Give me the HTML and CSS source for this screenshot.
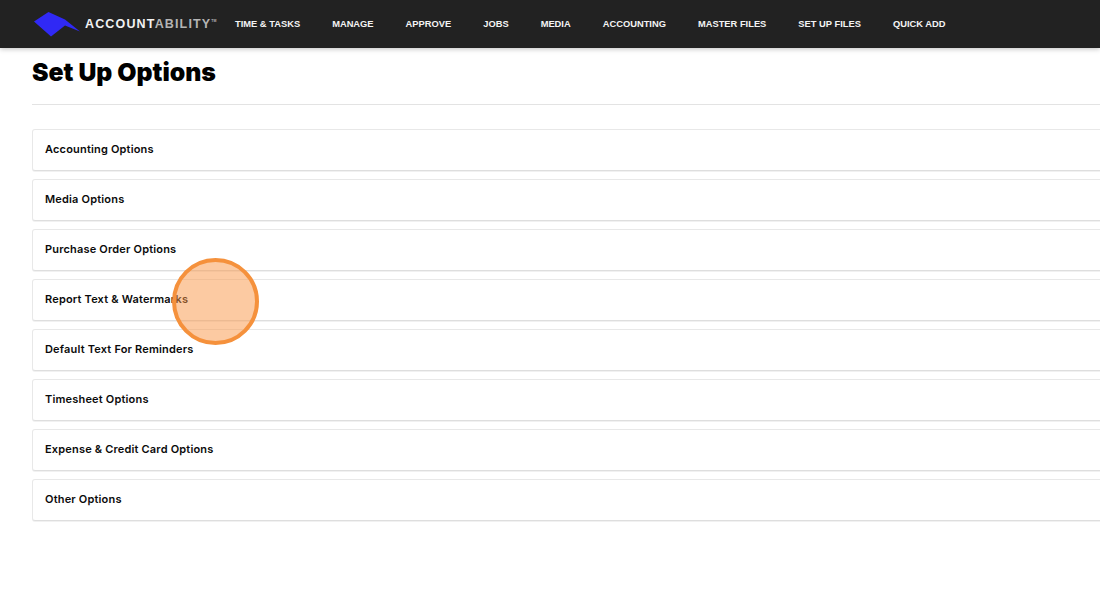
FILE: index.html
```html
<!DOCTYPE html>
<html lang="en">
<head>
  <meta charset="UTF-8">
  <title>Set Up Options</title>
  <link rel="stylesheet" href="styles.css">
</head>
<body>
  <header class="topbar">
    <a class="brand" href="#">
      <svg class="brand-mark" width="48" height="26" viewBox="0 0 48 26">
        <polygon points="1,10.5 15.5,1 32,8.5 47,20.5 32,14.5 18,25.5" fill="#3029f5"/>
      </svg>
      <span class="brand-name">ACCOUNT<span class="brand-dim">ABILITY</span><sup class="brand-tm">TM</sup></span>
    </a>
    <nav class="mainnav">
      <a href="#">TIME &amp; TASKS</a>
      <a href="#">MANAGE</a>
      <a href="#">APPROVE</a>
      <a href="#">JOBS</a>
      <a href="#">MEDIA</a>
      <a href="#">ACCOUNTING</a>
      <a href="#">MASTER FILES</a>
      <a href="#">SET UP FILES</a>
      <a href="#">QUICK ADD</a>
    </nav>
  </header>

  <main class="content">
    <h1>Set Up Options</h1>
    <div class="options">
      <div class="option">Accounting Options</div>
      <div class="option">Media Options</div>
      <div class="option">Purchase Order Options</div>
      <div class="option">Report Text &amp; Watermarks</div>
      <div class="option">Default Text For Reminders</div>
      <div class="option">Timesheet Options</div>
      <div class="option">Expense &amp; Credit Card Options</div>
      <div class="option">Other Options</div>
    </div>
  </main>

  <div class="click-marker"></div>
</body>
</html>
```

FILE: styles.css
```css
html, body {
  margin: 0;
  padding: 0;
  height: 100%;
  overflow: hidden;
  background: #fff;
}

body {
  font-family: Inter, "Liberation Sans", sans-serif;
  color: #0b0b0b;
}

.topbar {
  display: flex;
  align-items: center;
  height: 48px;
  padding-left: 33px;
  background: #222;
  box-shadow: 0 1px 5px rgba(0,0,0,0.25);
}

.brand {
  display: flex;
  align-items: center;
  width: 202px;
  flex: none;
  text-decoration: none;
}

.brand-mark {
  flex: none;
  margin-right: 4px;
}

.brand-name {
  font-family: "Liberation Sans", sans-serif;
  font-size: 12.5px;
  font-weight: bold;
  letter-spacing: 1.15px;
  color: #f2f2f2;
  white-space: nowrap;
}

.brand-dim {
  color: #b5b5b5;
}

.brand-tm {
  font-size: 3.5px;
  letter-spacing: 0;
  vertical-align: 6px;
  line-height: 0;
  color: #b5b5b5;
}

.mainnav {
  display: flex;
  gap: 32px;
  padding-bottom: 1px;
}

.mainnav a {
  font-family: "Liberation Sans", sans-serif;
  font-size: 9.33px;
  font-weight: bold;
  color: #f4f4f4;
  text-decoration: none;
  white-space: nowrap;
}

.content {
  margin-right: -20px;
  padding-left: 32px;
}

h1 {
  margin: 0;
  height: 56px;
  line-height: 48px;
  font-size: 24.8px;
  font-weight: 900;
  color: #000;
  border-bottom: 1px solid #e3e3e3;
}

.options {
  display: flex;
  flex-direction: column;
  gap: 8px;
  padding-top: 24px;
}

.option {
  height: 40px;
  line-height: 38px;
  padding-left: 12px;
  font-size: 11px;
  font-weight: 600;
  letter-spacing: 0.18px;
  background: #fff;
  border: 1px solid #e8e8e8;
  border-bottom-color: #dedede;
  border-radius: 3px;
  box-shadow: 0 1px 0 #f1f1f1;
}

.click-marker {
  position: absolute;
  left: 172px;
  top: 258px;
  width: 79px;
  height: 79px;
  border: 4px solid #f5913c;
  border-radius: 50%;
  background: rgba(250,150,70,0.5);
}
```
